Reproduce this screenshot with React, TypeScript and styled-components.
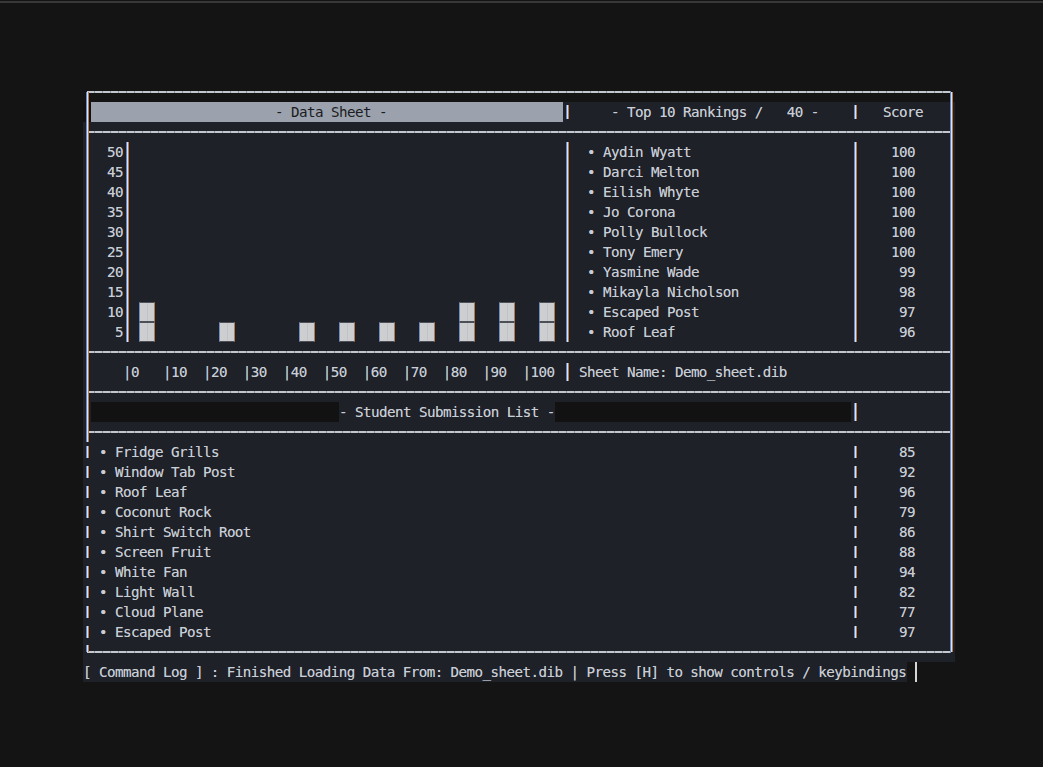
import React from "react";
import styled, { createGlobalStyle, css } from "styled-components";

// terminal grid: 109 columns of 8px, 30 rows of 20px
const COLS = 109;
const ROWS = 30;

const GlobalStyle = createGlobalStyle`
  html, body {
    margin: 0;
    padding: 0;
    background: #141414;
  }
`;

interface CellProps {
  $row: number;
  $col: number;
  $span?: number;
  $rows?: number;
}

const place = (p: CellProps) => css`
  grid-row: ${p.$row + 1} / span ${p.$rows ?? 1};
  grid-column: ${p.$col + 1} / span ${p.$span ?? 1};
`;

const Page = styled.div`
  width: 1043px;
  height: 767px;
  background: #141414;
  overflow: hidden;
`;

const WindowEdge = styled.div`
  margin-top: 1px;
  height: 2px;
  background: #383838;
`;

const Term = styled.div`
  display: grid;
  grid-template-columns: repeat(${COLS}, 8px);
  grid-template-rows: repeat(${ROWS}, 20px);
  margin: 79px 0 0 83px;
  font-family: "DejaVu Sans Mono", "Liberation Mono", monospace;
  font-size: 14.2px;
  letter-spacing: -0.55px;
  line-height: 20px;
  color: #c9ced6;
  text-shadow: 0 0 0.3px rgba(201, 206, 214, 0.6);
`;

const Fill = styled.div<CellProps & { $tone: "panel" | "black" | "select" }>`
  ${place};
  background: ${(p) =>
    p.$tone === "panel" ? "#1f2129" : p.$tone === "black" ? "#121212" : "#9ba2ad"};
`;

const HRule = styled.div<CellProps>`
  ${place};
  align-self: center;
  height: 2px;
  margin: 0 4px;
  background: repeating-linear-gradient(
    to right,
    #c3c7cf 0 7px,
    #8d9199 7px 8px
  );
`;

const VRule = styled.div<CellProps & { $inset?: number; $top?: number; $bottom?: number }>`
  ${place};
  justify-self: center;
  width: 1px;
  margin-top: ${(p) => p.$top ?? p.$inset ?? 0}px;
  margin-bottom: ${(p) => p.$bottom ?? p.$inset ?? 0}px;
  background: #dfe3ea;
  box-shadow: -1px 0 0 #5d88d4, 1px 0 0 #b97a48;
`;

const Txt = styled.span<CellProps & { $right?: boolean; $dark?: boolean }>`
  ${place};
  white-space: pre;
  text-align: ${(p) => (p.$right ? "right" : "left")};
  color: ${(p) => (p.$dark ? "#1a1c22" : "#c9ced6")};
  ${(p) => p.$dark && "text-shadow: none;"}
`;

const Bar = styled.div<CellProps>`
  ${place};
  position: relative;
  box-sizing: border-box;
  background: #cdcecf;
  border-top: 1px solid #4d5057;
  border-bottom: 1px solid #4d5057;
  border-left: 1px solid #6d8fc6;
  border-right: 1px solid #b27c4c;
  &::after {
    content: "";
    position: absolute;
    top: 0;
    bottom: 0;
    left: 7px;
    width: 1px;
    background: #bfc3c6;
  }
`;

const Cursor = styled.div<CellProps>`
  ${place};
  justify-self: start;
  width: 2px;
  background: #d6d6d6;
`;

const rankings: [string, number][] = [
  ["Aydin Wyatt", 100],
  ["Darci Melton", 100],
  ["Eilish Whyte", 100],
  ["Jo Corona", 100],
  ["Polly Bullock", 100],
  ["Tony Emery", 100],
  ["Yasmine Wade", 99],
  ["Mikayla Nicholson", 98],
  ["Escaped Post", 97],
  ["Roof Leaf", 96],
];

const students: [string, number][] = [
  ["Fridge Grills", 85],
  ["Window Tab Post", 92],
  ["Roof Leaf", 96],
  ["Coconut Rock", 79],
  ["Shirt Switch Root", 86],
  ["Screen Fruit", 88],
  ["White Fan", 94],
  ["Light Wall", 82],
  ["Cloud Plane", 77],
  ["Escaped Post", 97],
];

// histogram: bucket -> count (each block is 5)
const buckets: [number, number][] = [
  [0, 2],
  [20, 1],
  [40, 1],
  [50, 1],
  [60, 1],
  [70, 1],
  [80, 2],
  [90, 2],
  [100, 2],
];

const yLabels = [50, 45, 40, 35, 30, 25, 20, 15, 10, 5];

const CHART_TOP = 3;
const LIST_TOP = 18;

export default function App() {
  return (
    <Page>
      <GlobalStyle />
      <WindowEdge />
      <Term>
        {/* backgrounds */}
        <Fill $tone="panel" $row={1} $col={0} $span={COLS} $rows={28} />
        <Fill $tone="panel" $row={29} $col={0} $span={103} />
        <Fill $tone="black" $row={1} $col={0} />
        <Fill $tone="select" $row={1} $col={1} $span={59} />
        <Fill $tone="black" $row={16} $col={1} $span={31} />
        <Fill $tone="black" $row={16} $col={59} $span={37} />

        {/* frame */}
        <HRule $row={0} $col={0} $span={COLS} />
        <HRule $row={2} $col={0} $span={COLS} />
        <HRule $row={13} $col={0} $span={COLS} />
        <HRule $row={15} $col={0} $span={COLS} />
        <HRule $row={17} $col={0} $span={COLS} />
        <HRule $row={28} $col={0} $span={COLS} />
        <VRule $row={0} $col={0} $rows={18} $top={10} />
        {students.map((_, i) => (
          <VRule key={"l" + i} $row={LIST_TOP + i} $col={0} $inset={4} />
        ))}
        <VRule $row={28} $col={0} $top={3} $bottom={10} />
        <VRule $row={0} $col={108} $rows={29} $inset={10} />

        {/* header row */}
        <Txt $dark $row={1} $col={24}>- Data Sheet -</Txt>
        <VRule $row={1} $col={60} $inset={3} />
        <Txt $row={1} $col={66}>- Top 10 Rankings /   40 -</Txt>
        <VRule $row={1} $col={96} $inset={3} />
        <Txt $row={1} $col={100}>Score</Txt>

        {/* chart */}
        {yLabels.map((v, i) => (
          <Txt key={v} $right $row={CHART_TOP + i} $col={1} $span={4}>
            {v}
          </Txt>
        ))}
        <VRule $row={CHART_TOP} $col={5} $rows={10} />
        {buckets.flatMap(([b, n]) =>
          Array.from({ length: n }, (_, k) => (
            <Bar key={b + "-" + k} $row={12 - k} $col={7 + b / 2} $span={2} />
          ))
        )}
        <VRule $row={CHART_TOP} $col={60} $rows={10} />

        {/* rankings */}
        {rankings.map(([name, score], i) => (
          <React.Fragment key={"r" + i}>
            <Txt $row={CHART_TOP + i} $col={63}>•</Txt>
            <Txt $row={CHART_TOP + i} $col={65} $span={30}>{name}</Txt>
            <Txt $right $row={CHART_TOP + i} $col={99} $span={5}>{score}</Txt>
          </React.Fragment>
        ))}
        <VRule $row={CHART_TOP} $col={96} $rows={10} />

        {/* axis row */}
        <Txt $row={14} $col={5} $span={54}>
          |0   |10  |20  |30  |40  |50  |60  |70  |80  |90  |100
        </Txt>
        <VRule $row={14} $col={60} $inset={1} />
        <Txt $row={14} $col={62} $span={30}>Sheet Name: Demo_sheet.dib</Txt>

        {/* student list */}
        <Txt $row={16} $col={32} $span={27}>- Student Submission List -</Txt>
        <VRule $row={16} $col={96} $inset={1} />
        {students.map(([name, score], i) => (
          <React.Fragment key={"s" + i}>
            <Txt $row={LIST_TOP + i} $col={2}>•</Txt>
            <Txt $row={LIST_TOP + i} $col={4} $span={40}>{name}</Txt>
            <VRule $row={LIST_TOP + i} $col={96} $inset={4} />
            <Txt $right $row={LIST_TOP + i} $col={99} $span={5}>{score}</Txt>
          </React.Fragment>
        ))}

        {/* command log */}
        <Txt $row={29} $col={0} $span={103}>
          [ Command Log ] : Finished Loading Data From: Demo_sheet.dib | Press [H] to show controls / keybindings
        </Txt>
        <Cursor $row={29} $col={104} />
      </Term>
    </Page>
  );
}
